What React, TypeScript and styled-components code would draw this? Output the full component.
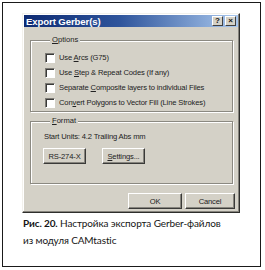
import React from 'react'
import styled, { createGlobalStyle } from 'styled-components'

const GlobalStyle = createGlobalStyle`
  html, body {
    margin: 0;
    padding: 0;
    background: #fff;
  }
  body {
    width: 265px;
    height: 270px;
    overflow: hidden;
  }
`;

const face = '#d4d1c7';
const uiFont = `"Liberation Sans", Arial, sans-serif`;

const Frame = styled.div`
  box-sizing: border-box;
  margin: 2px 0 0 2px;
  width: 259px;
  height: 265px;
  border: 1px solid #1a1a1a;
  padding: 10px 0 0 19px;
  display: flex;
  flex-direction: column;
`;

const Dialog = styled.div`
  box-sizing: border-box;
  width: 218px;
  height: 200px;
  background: ${face};
  border: 1px solid;
  border-color: #f2f1ec #2e2e2c #2e2e2c #f2f1ec;
  box-shadow: inset -1px -1px 0 #86847d, inset 1px 1px 0 #fff;
  padding: 1px;
  display: flex;
  flex-direction: column;
  font-family: ${uiFont};
  font-size: 7.6px;
  color: #222;
`;

const TitleBar = styled.div`
  height: 12px;
  background: linear-gradient(90deg, #0d2a72 0%, #2f559c 45%, #a9c8ee 100%);
  display: flex;
  align-items: center;
  justify-content: space-between;
  padding: 0 2px 0 2px;
`;

const Title = styled.span`
  color: #fff;
  font-weight: bold;
  font-size: 9.6px;
  letter-spacing: -0.1px;
`;

const TitleButtons = styled.div`
  display: flex;
  gap: 2px;
`;

const TitleButton = styled.div`
  box-sizing: border-box;
  width: 11px;
  height: 10px;
  background: ${face};
  border: 1px solid;
  border-color: #fff #404040 #404040 #fff;
  display: flex;
  align-items: center;
  justify-content: center;
  font-size: 8px;
  font-weight: bold;
  line-height: 1;
  color: #111;
`;

const Body = styled.div`
  flex: 1;
  display: flex;
  flex-direction: column;
  padding: 8px 5px 0 6px;
`;

const Group = styled.fieldset<{ $height: number; $gap?: number; $top?: number }>`
  box-sizing: border-box;
  margin: 0 0 ${p => p.$gap ?? 0}px 0;
  height: ${p => p.$height}px;
  padding: ${p => p.$top ?? 2}px 0 0 14px;
  border: 1px solid #8b8981;
  box-shadow: inset 1px 1px 0 #fff, 1px 1px 0 #fff;
  display: flex;
  flex-direction: column;
`;

const Legend = styled.legend`
  margin-left: 5px;
  padding: 0 2px;
  background: ${face};
  font-size: 7.6px;
  line-height: 10px;
`;

const Row = styled.label`
  display: flex;
  align-items: center;
  gap: 4px;
  height: 15px;
  white-space: nowrap;
  letter-spacing: -0.15px;
`;

const Check = styled.span`
  box-sizing: border-box;
  width: 10px;
  height: 10px;
  flex: none;
  background: #fff;
  border: 1px solid;
  border-color: #7d7b75 #fff #fff #7d7b75;
  box-shadow: inset 1px 1px 0 #3a3a38;
`;

const InfoLine = styled.div`
  margin: 4px 0 0 -1px;
  height: 12px;
  letter-spacing: -0.15px;
`;

const ButtonRow = styled.div`
  display: flex;
  gap: 16px;
  margin: 4px 0 0 -2px;
`;

const PushButton = styled.div<{ $width: number }>`
  box-sizing: border-box;
  width: ${p => p.$width}px;
  height: 16px;
  background: ${face};
  border: 1px solid;
  border-color: #fff #3a3a38 #3a3a38 #fff;
  box-shadow: inset -1px -1px 0 #86847d;
  display: flex;
  align-items: center;
  justify-content: center;
  letter-spacing: -0.15px;
`;

const Footer = styled.div`
  display: flex;
  justify-content: flex-end;
  gap: 3px;
  margin: 9px -2px 0 0;
`;

const Caption = styled.div`
  margin: 2px 0 0 1px;
  font-family: Lato, "Open Sans", "Liberation Sans", sans-serif;
  font-size: 10px;
  line-height: 17px;
  letter-spacing: -0.12px;
  color: #151515;
`;

const options: [string, string, string][] = [
  ['Use ', 'A', 'rcs (G75)'],
  ['Use ', 'S', 'tep & Repeat Codes (If any)'],
  ['Separate ', 'C', 'omposite layers to individual Files'],
  ['Con', 'v', 'ert Polygons to Vector Fill (Line Strokes)'],
];

export default function App() {
  return (
    <>
      <GlobalStyle />
      <Frame>
        <Dialog>
          <TitleBar>
            <Title>Export Gerber(s)</Title>
            <TitleButtons>
              <TitleButton>?</TitleButton>
              <TitleButton>×</TitleButton>
            </TitleButtons>
          </TitleBar>
          <Body>
            <Group $height={77} $gap={4} $top={5}>
              <Legend>
                <u>O</u>ptions
              </Legend>
              {options.map(([a, k, b]) => (
                <Row key={a + b}>
                  <Check />
                  <span>
                    {a}
                    <u>{k}</u>
                    {b}
                  </span>
                </Row>
              ))}
            </Group>
            <Group $height={68}>
              <Legend>
                <u>F</u>ormat
              </Legend>
              <InfoLine>Start Units: 4.2 Trailing Abs mm</InfoLine>
              <ButtonRow>
                <PushButton $width={43}>RS-274-X</PushButton>
                <PushButton $width={43}>
                  <span>
                    <u>S</u>ettings...
                  </span>
                </PushButton>
              </ButtonRow>
            </Group>
            <Footer>
              <PushButton $width={54}>OK</PushButton>
              <PushButton $width={50}>Cancel</PushButton>
            </Footer>
          </Body>
        </Dialog>
        <Caption>
          <b>Рис. 20.</b> Настройка экспорта Gerber-файлов
          <br />
          из модуля CAMtastic
        </Caption>
      </Frame>
    </>
  );
}
